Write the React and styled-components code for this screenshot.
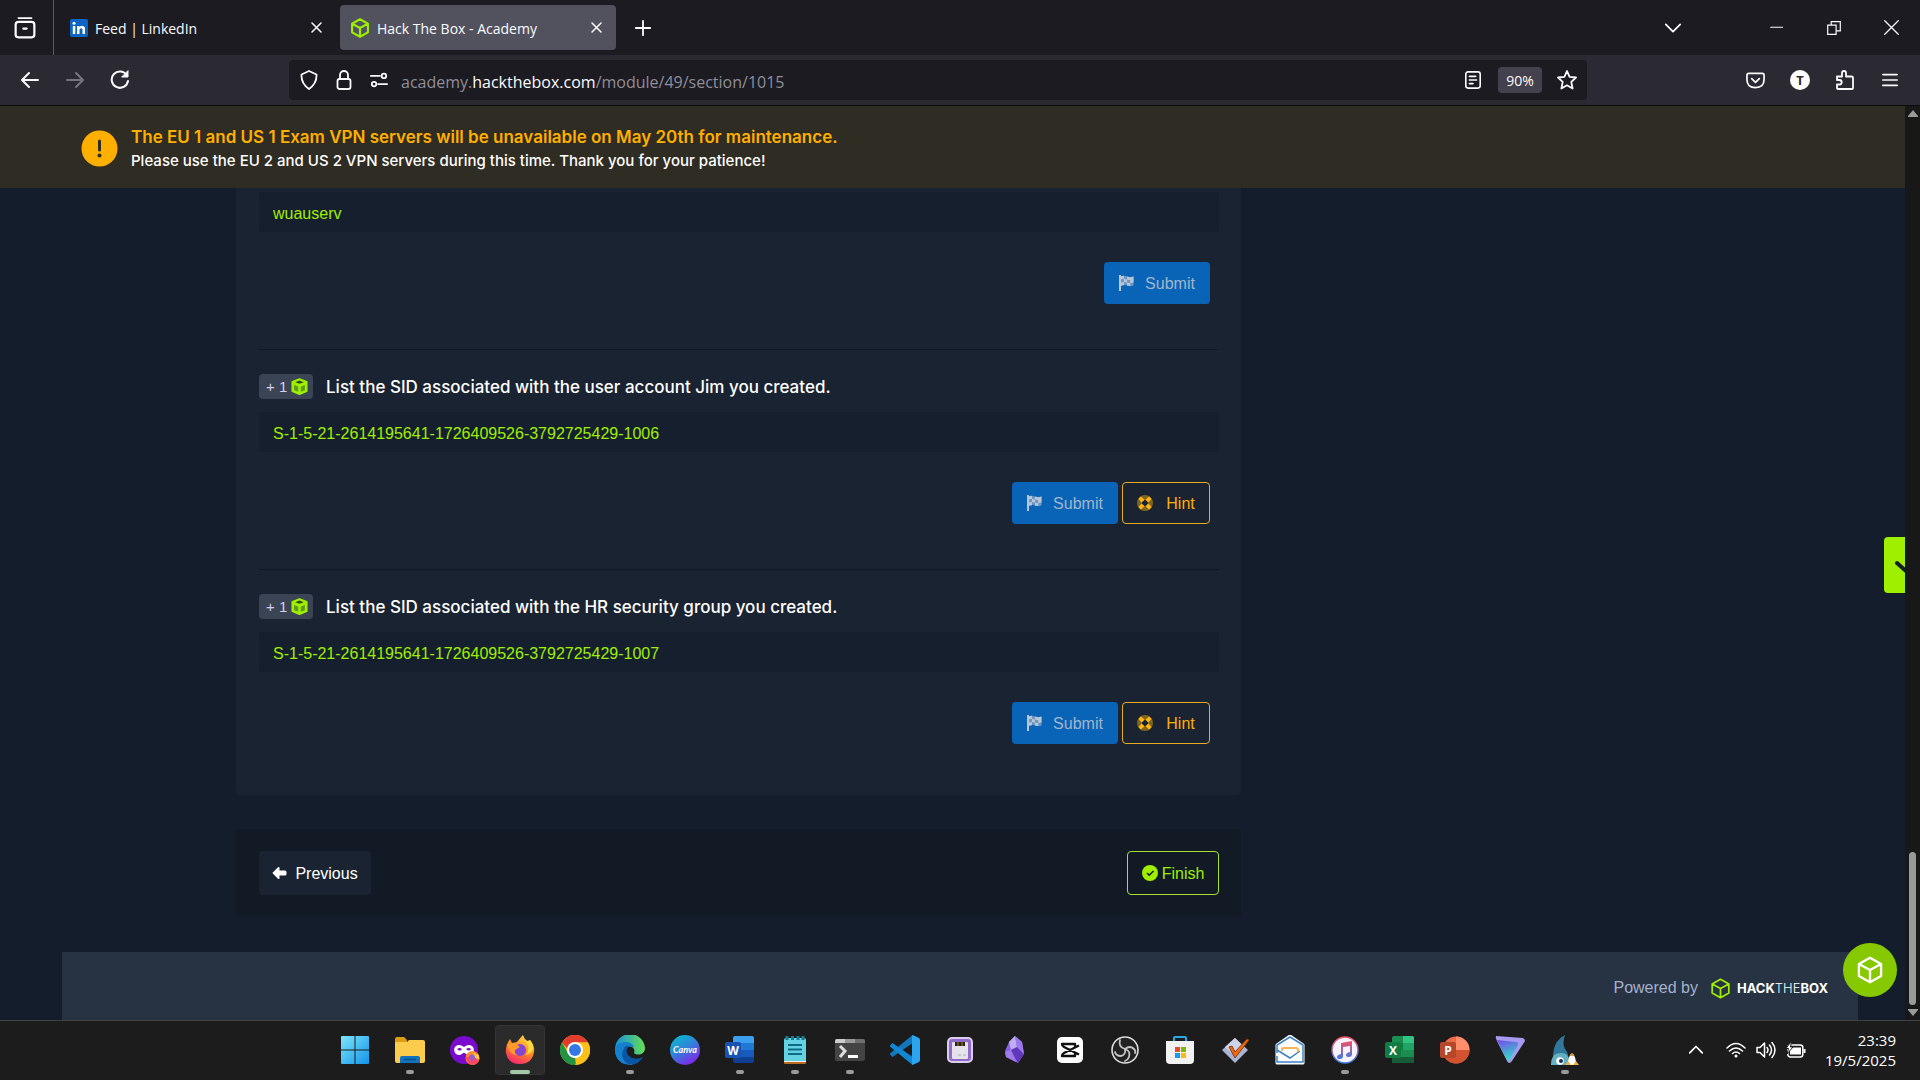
import React from 'react';
import styled, { createGlobalStyle, css } from 'styled-components';

const GlobalStyle = createGlobalStyle`
  * { box-sizing: border-box; }
  body { margin: 0; background: #141d2b; }
  button, input { font: inherit; color: inherit; }
  svg { display: block; flex: none; }
`;

const uiFont = `'Open Sans', 'Noto Sans', sans-serif`;
const pageFont = `'Liberation Sans', Arial, sans-serif`;

const Screen = styled.div`
  display: flex;
  flex-direction: column;
  height: 100vh;
  min-height: 960px;
  overflow: hidden;
`;

/* ---------- browser chrome ---------- */

const TabBar = styled.header`
  display: flex;
  align-items: center;
  height: 55px;
  background: #1c1b22;
  color: #fbfbfe;
  font: 14px ${uiFont};
`;

const IconButton = styled.button`
  display: flex;
  align-items: center;
  justify-content: center;
  flex: none;
  width: ${p => p.$w || 32}px;
  height: 32px;
  padding: 0;
  border: 0;
  background: none;
  color: ${p => p.$color || '#fbfbfe'};
`;

const RecentBox = styled.div`
  display: flex;
  align-items: center;
  justify-content: center;
  width: 54px;
  height: 55px;
  padding-right: 3px;
  border-right: 1px solid #5b5b66;
`;

const Tab = styled.div`
  display: flex;
  align-items: center;
  gap: 7px;
  width: 276px;
  height: 45px;
  margin-left: ${p => (p.$active ? 4 : 6)}px;
  padding: 0 4px 0 10px;
  border-radius: 4px;
  background: ${p => (p.$active ? '#52525e' : 'transparent')};
  span { flex: 1; padding-top: 2px; white-space: nowrap; }
`;

const WindowControls = styled.div`
  display: flex;
  align-items: center;
  gap: 25px;
  margin-left: auto;
  padding-right: 13px;
`;

const NavBar = styled.nav`
  display: flex;
  align-items: center;
  height: 51px;
  padding: 0 14px;
  background: #2b2a33;
  border-bottom: 1px solid #0c0c0d;
`;

const NavButtons = styled.div`
  display: flex;
  gap: 13px;
  width: 275px;
`;

const UrlBar = styled.div`
  display: flex;
  align-items: center;
  flex: 1;
  height: 40px;
  margin-right: 152px;
  padding: 0 4px;
  border-radius: 4px;
  background: #1c1b22;
  color: #fbfbfe;
`;

const UrlText = styled.div`
  flex: 1;
  margin-left: 6px;
  padding-top: 3px;
  font: 16px ${uiFont};
  color: #8f8e98;
  white-space: nowrap;
  b { font-weight: 400; color: #fbfbfe; }
`;

const Zoom = styled.button`
  width: 44px;
  height: 26px;
  margin: 0 9px;
  padding: 0;
  border: 0;
  border-radius: 4px;
  background: #42414d;
  font: 14px ${uiFont};
`;

const Toolbar = styled.div`
  display: flex;
  gap: 13px;
`;

/* ---------- web page ---------- */

const Viewport = styled.div`
  display: flex;
  flex: 1;
  min-height: 0;
`;

const Page = styled.div`
  position: relative;
  display: flex;
  flex-direction: column;
  flex: 1;
  min-width: 0;
  background: #141d2b;
  color: #fff;
  font-family: ${pageFont};
`;

const Banner = styled.div`
  display: flex;
  align-items: center;
  gap: 13px;
  height: 82px;
  padding: 3px 0 0 81px;
  background: #2f2c23;
  h1 { margin: 0; font: 600 17px/24px Inter, sans-serif; color: #ffaf00; }
  p { margin: 0; font: 500 15px/24px Inter, sans-serif; }
`;

const Columns = styled.main`
  display: grid;
  grid-template-columns: minmax(0, 1005fr) minmax(0, 664fr);
  padding-left: 236px;
`;

const QuestionCard = styled.section`
  padding: 4px 22px 51px 23px;
  border-radius: 0 0 4px 4px;
  background: #1a2332;
`;

const Question = styled.form`
  display: flex;
  flex-direction: column;
  & + & {
    margin-top: 45px;
    padding-top: 24px;
    border-top: 1px solid #111925;
  }
`;

const QuestionHead = styled.div`
  display: flex;
  align-items: center;
  gap: 13px;
  height: 25px;
  margin-bottom: 13px;
  label { font: 500 17px Inter, sans-serif; }
`;

const Points = styled.span`
  display: flex;
  align-items: center;
  justify-content: space-between;
  width: 54px;
  height: 25px;
  padding: 0 5px 0 7px;
  border-radius: 4px;
  background: #3b4454;
  color: #d3d0ee;
  font-size: 15px;
`;

const Answer = styled.input`
  width: 100%;
  height: 40px;
  padding: 3px 14px 0;
  border: 0;
  border-radius: 4px;
  background: #161f2d;
  color: #9fef00;
  font: 16px ${pageFont};
  outline: none;
`;

const Actions = styled.div`
  display: flex;
  justify-content: flex-end;
  gap: 4px;
  margin: 30px 9px 0 0;
`;

const variants = {
  submit: css`
    width: 106px;
    background: #0964b8;
    color: #a1b5cb;
  `,
  hint: css`
    width: 88px;
    border-color: #e8ab22;
    color: #ffaf00;
  `,
  previous: css`
    width: 112px;
    height: 44px;
    background: #1a2332;
    color: #fff;
  `,
  finish: css`
    width: 92px;
    height: 44px;
    border-color: #a9e036;
    color: #9fef00;
  `,
};

const Button = styled.button`
  display: flex;
  align-items: center;
  justify-content: center;
  gap: ${p => p.$gap}px;
  height: 42px;
  padding: 0;
  border: 1px solid transparent;
  border-radius: 4px;
  background: transparent;
  font: 16px ${pageFont};
  span { padding-top: 2px; }
  ${p => variants[p.$kind]}
`;

const Pager = styled.div`
  display: flex;
  justify-content: space-between;
  align-items: center;
  height: 87px;
  margin-top: 34px;
  padding: 0 22px 0 23px;
  border-radius: 4px;
  background: #111a25;
`;

const Footer = styled.footer`
  display: flex;
  align-items: center;
  justify-content: flex-end;
  height: 68px;
  margin: auto 47px 0 62px;
  padding: 4px 30px 0 0;
  background: #273342;
  color: #a4b1cd;
  font-size: 16px;
`;

const Brand = styled.a`
  display: flex;
  align-items: center;
  gap: 6px;
  margin-left: 12px;
  color: #fff;
  text-decoration: none;
  font: 300 13px Inter, sans-serif;
  b { font-weight: 700; }
`;

const SideTab = styled.button`
  position: absolute;
  right: 0;
  top: 431px;
  width: 21px;
  height: 56px;
  padding: 0;
  border: 0;
  border-radius: 4px 0 0 4px;
  background: #9fef00;
`;

const ChatButton = styled.button`
  position: absolute;
  right: 8px;
  bottom: 23px;
  display: flex;
  align-items: center;
  justify-content: center;
  width: 54px;
  height: 54px;
  padding: 0;
  border: 0;
  border-radius: 50%;
  background: #86c900;
  color: #fff;
`;

const ScrollBar = styled.div`
  display: flex;
  flex-direction: column;
  align-items: center;
  width: 15px;
  padding: 4px 0;
  background: #181818;
`;

const Thumb = styled.div`
  width: 7px;
  height: 153px;
  margin: auto 0 4px;
  border-radius: 4px;
  background: #9a9a9a;
`;

/* ---------- taskbar ---------- */

const TaskBar = styled.footer`
  display: grid;
  grid-template-columns: 1fr auto 1fr;
  align-items: center;
  height: 60px;
  padding-bottom: 2px;
  border-top: 1px solid #444;
  background: #1c1c1c;
  color: #fff;
  font: 15px/20px ${uiFont};
`;

const Apps = styled.div`
  display: flex;
  grid-column: 2;
  gap: 5px;
`;

const AppButton = styled.button`
  position: relative;
  display: flex;
  align-items: center;
  justify-content: center;
  width: 50px;
  height: 50px;
  padding: 0;
  border: 1px solid ${p => (p.$state === 'active' ? '#333' : 'transparent')};
  border-radius: 4px;
  background: ${p => (p.$state === 'active' ? '#2b2b2b' : 'transparent')};
  &::after {
    content: '';
    position: absolute;
    bottom: 0;
    width: ${p => (p.$state === 'active' ? 20 : 8)}px;
    height: 4px;
    border-radius: 2px;
    background: ${p => (p.$state === 'active' ? '#a5c8a8' : '#9a9a9a')};
    display: ${p => (p.$state ? 'block' : 'none')};
  }
`;

const Tray = styled.div`
  display: flex;
  align-items: center;
  justify-content: flex-end;
  gap: 10px;
  padding-right: 24px;
`;

const TrayToggle = styled.button`
  margin-right: 13px;
  padding: 0;
  border: 0;
  background: none;
`;

const Clock = styled.time`
  margin-left: 9px;
  text-align: right;
`;

/* ---------- icons ---------- */

const Line = ({ s = 20, w = 2, children, ...rest }) => (
  <svg width={s} height={s} viewBox="0 0 20 20" fill="none" stroke="currentColor" strokeWidth={w} strokeLinecap="round" strokeLinejoin="round" {...rest}>{children}</svg>
);

const Cube = ({ s, w = 2, color = 'currentColor' }) => (
  <svg width={s} height={s} viewBox="0 0 24 24" fill="none" stroke={color} strokeWidth={w} strokeLinejoin="round">
    <path d="M12 1.5 21.5 6.8V17.2L12 22.5 2.5 17.2V6.8ZM2.5 6.8 12 12l9.5-5.2M12 12v10.5" />
  </svg>
);

const PointsCube = () => (
  <svg width="17" height="17" viewBox="0 0 18 18">
    <path d="M9 1.200 16.500 4v10L9 17 1.500 14V4Z" fill="#9fef00" stroke="#9fef00" strokeWidth="2" strokeLinejoin="round" />
    <path d="m4.500 4.400 4.500-1.800 4.500 1.800L9 6.200Z" fill="#2c4a25" />
    <path d="m3.300 7.300 4.300 1.700v5.600l-4.300-1.700ZM14.700 7.300 10.400 9v5.600l4.300-1.700Z" fill="#5f9a20" />
  </svg>
);

const Flag = () => (
  <svg width="15" height="16" viewBox="0 0 15 16">
    <path d="M0 0h2v16H0Z" fill="#b9c6d4" />
    <path d="M2 1.500q3-1.500 6 0t6.500 0v9q-3.500 1.500-6.500 0t-6 0Z" fill="#6c97c4" />
    <path d="M2 1.200 5 .8v3l3 .8v3L5 7v3.300l-3 .5V7.500l3-.5V3.800l-3 .5ZM8 1.500l3.200.8v3l3.300-.8v3l-3.300.8V11L8 10.400v-3l3.200.9v-3L8 4.600ZM11.200 2.200l3.300-.7v3l-3.300.8Z" fill="#b9c6d4" />
  </svg>
);

const LifeRing = () => (
  <svg width="16" height="16" viewBox="0 0 16 16">
    <circle cx="8" cy="8" r="5.500" fill="none" stroke="#80651f" strokeWidth="5" />
    <path d="m1.500 3.900 2.400-2.400 3.600 3.200-2.800 2.800ZM14.500 3.900l-2.400-2.400-3.600 3.200 2.800 2.800ZM1.500 12.100l2.400 2.400 3.600-3.200-2.800-2.800ZM14.500 12.100l-2.400 2.400-3.600-3.200 2.800-2.800Z" fill="#ffb617" />
  </svg>
);

const icons = {
  windows: <><defs><linearGradient id="win" x2="1" y2="1"><stop stopColor="#7de5fd" /><stop offset="1" stopColor="#1294e8" /></linearGradient></defs><path d="M1 2q0-1 1-1h12.5v13.5H1ZM15.5 1H28q1 0 1 1v12.5H15.500ZM1 15.500h13.500V29H2q-1 0-1-1ZM15.500 15.500H29V28q0 1-1 1H15.500Z" fill="url(#win)" /></>,
  explorer: <><path d="M0 4q0-2 2-2h7l3 3v6H0Z" fill="#dd9c13" /><path d="M0 7h12l2-2h14q2 0 2 2v19q0 2-2 2H2q-2 0-2-2Z" fill="#fccc4c" /><path d="M5 28v-5q0-2 2-2h16q2 0 2 2v5Z" fill="#1272bd" /><path d="M9 24.500h12" stroke="#075088" strokeWidth="1.500" /></>,
  private: <><circle cx="14" cy="15" r="14" fill="#7a0bcd" /><path d="M5 12c3-3 6-2 9 0 3-2 6-3 9 0 2 3 0 8-4 8-3 0-3-2-5-2s-2 2-5 2c-4 0-6-5-4-8Z" fill="#fff" /><path d="M7 14q3-2 5 0-2 3-5 0ZM16 14q3-2 5 0-2 3-5 0Z" fill="#7a0bcd" /><circle cx="22.500" cy="23" r="7" fill="#ff8a2d" /><path d="M15.500 22q2 8 8 8 6-2 6-8Z" fill="#ff4767" /><path d="m23 15 2 4 4 1 0 5-5-3Z" fill="#ffc93d" /><circle cx="22" cy="22.500" r="3" fill="#9a5ccf" /></>,
  firefox: <><defs><linearGradient id="ff" x1=".8" x2=".3" y2="1"><stop stopColor="#ffe04a" /><stop offset=".5" stopColor="#ff8a24" /><stop offset="1" stopColor="#f8256e" /></linearGradient></defs><path d="M18 0q1 4 4 6 2 0 3-1 5 6 4 12-2 12-14 12Q3 29 1 18 0 11 5 4l2 4 5-1q3-4 6-7Z" fill="url(#ff)" /><circle cx="15" cy="15" r="6" fill="#8346d2" /><path d="M2 9q2 1 4-1l5 1 4 3-5 3q-1 4 3 5-7 0-9-5Z" fill="#ff9a2b" /><path d="M18 0q2 6 4 9 3 5-1 11 8-2 7-10l-3-5q-1 1-3 1-3-2-4-6Z" fill="#ffd83d" /></>,
  chrome: <><circle cx="15" cy="15" r="15" fill="#fbc116" /><path d="M2 7.500A15 15 0 0 1 28 7.500H15v15Z" fill="#e33b2e" /><path d="M2 7.500 8.500 19 15 22.500 16 30A15 15 0 0 1 2 7.500Z" fill="#229342" /><path d="m21.500 19-6.500 11a15 15 0 0 0 13-22.500H15Z" fill="#fbc116" /><circle cx="15" cy="15" r="8" fill="#fff" /><circle cx="15" cy="15" r="6" fill="#3478e5" /></>,
  edge: <><defs><linearGradient id="edge" x2="1"><stop stopColor="#168fdc" /><stop offset="1" stopColor="#67df55" /></linearGradient></defs><path d="M0 15A15 15 0 0 1 30 13c0 7-8 8-11 5 2-6-5-9-11-5-3 2-3 10 1 16Q0 24 0 15Z" fill="url(#edge)" /><path d="M0 15q2-8 10-8 7 0 9 5-8-2-8 5 1 8 9 10l-3 3Q1 30 0 15Z" fill="#1580ce" /><path d="M9 13q2-3 5-2-5 5 0 10 6 5 14 1-5 9-15 7Q4 23 9 13Z" fill="#0b55a5" /></>,
  canva: <><defs><linearGradient id="canva" x2=".6" y2="1"><stop stopColor="#00c4cc" /><stop offset=".5" stopColor="#2c88d9" /><stop offset="1" stopColor="#7c2ae8" /></linearGradient></defs><circle cx="15" cy="15" r="15" fill="url(#canva)" /><text x="15" y="18" textAnchor="middle" fontSize="9" fontStyle="italic" fontWeight="700" fontFamily="Lato" fill="#fff">Canva</text></>,
  word: <><path d="M8 3q0-2 2-2h17q2 0 2 2v6H8Z" fill="#3d9ff0" /><path d="M8 8h21v7H8Z" fill="#2079d3" /><path d="M8 15h21v7H8Z" fill="#185abd" /><path d="M8 22h21v4q0 2-2 2H10q-2 0-2-2Z" fill="#103f91" /><rect y="7" width="16" height="16" rx="2" fill="#1853b2" /><text x="8" y="19.500" textAnchor="middle" fontSize="12" fontWeight="700" fontFamily="Open Sans" fill="#fff">W</text></>,
  notepad: <><rect x="4" y="24" width="22" height="5" rx="1" fill="#b96c1d" /><rect x="4" y="3" width="22" height="24" rx="2" fill="#63d2e3" /><path d="M4 26h22v1H4Z" fill="#eee" /><path d="M8 10h14M8 14.500h14M8 19h14" stroke="#106b82" strokeWidth="2" /><path d="M7 1v4M12.500 1v4M18 1v4M23 1v4" stroke="#147e90" strokeWidth="3" /></>,
  terminal: <><rect y="4" width="30" height="22" rx="2" fill="#444" /><path d="M0 8V6q0-2 2-2h8v4Z" fill="#ccc" /><path d="M10 4h10v4H10Z" fill="#999" /><path d="M20 4h8q2 0 2 2v2H20Z" fill="#707070" /><path d="m5 11 5 5-5 6" fill="none" stroke="#ddd" strokeWidth="3" /><path d="M13 21.500h10" stroke="#fff" strokeWidth="3" /></>,
  code: <><path d="m2.500 22-2-2q-1-1 0-2L22 .500v8Z" fill="#1177bd" /><path d="m2.500 8-2 2q-1 1 0 2L22 29.500v-8Z" fill="#1287d4" /><path d="M22 0q1 0 7 3 1 1 1 2v20q0 1-1 2-6 3-7 3Z" fill="#2ba5ef" /></>,
  disk: <><rect x="3" y="3" width="24" height="24" rx="4" fill="#8f6cc8" stroke="#dccdee" strokeWidth="2" /><rect x="7" y="7" width="16" height="17" rx="1" fill="#e6e2ec" /><path d="M10 7h10v4H10Z" fill="#2a2418" /><path d="M13 7v4M17 7v4" stroke="#b08a28" /><path d="M13 20h3m2 0h3" stroke="#aaa" /></>,
  obsidian: <><path d="m15 1 7 6 2 12-6 9-12-6-1-6 4-9Z" fill="#8b60e6" /><path d="m15 1 2 11-6 3-2-8Z" fill="#c2adf5" /><path d="m11 15-6 2 1 5 10 5Z" fill="#a17be9" /><path d="m17 12 7 7-6 9-7-13Z" fill="#6038b9" /><path d="m15 1 7 6 2 12-7-7Z" fill="#9a78e9" /></>,
  capcut: <><rect x="2" y="2" width="26" height="26" rx="5" fill="#fff" /><path d="M24 10.500 9 18q-2 1-2 3h13v-2.500M24 19.500 9 12q-2-1-2-3h13v2.500" fill="none" stroke="#111" strokeWidth="2.400" strokeLinejoin="round" /></>,
  obs: <><circle cx="15" cy="15" r="13" fill="#222" stroke="#ddd" strokeWidth="1.600" /><path d="M10 5q-2 7 5 9 5-4 9 0 2 2 1 4M15 14q1 6-4 7-5 0-6-4M15 14q6 2 4 8-1 3-4 4" fill="none" stroke="#c4c4c4" strokeWidth="1.800" strokeLinecap="round" /></>,
  store: <><path d="M9 7V3q0-1 1-1h10q1 0 1 1v4" fill="none" stroke="#2ca9e5" strokeWidth="2" /><path d="M1 6h28v19q0 4-4 4H5q-4 0-4-4Z" fill="#f2f2f2" /><path d="M10 12h5v5h-5Z" fill="#e84e25" /><path d="M16 12h5v5h-5Z" fill="#7eb900" /><path d="M10 18h5v5h-5Z" fill="#149fea" /><path d="M16 18h5v5h-5Z" fill="#fdb813" /></>,
  todo: <><path d="m15 3 13 12-13 13L2 15Z" fill="#aab5d5" /><path d="m15 3 9 9-9 9L5 12Z" fill="#ccd4e9" /><path d="m9 12 3-1 3 6L27 4l2 1-14 18Z" fill="#ed6b12" stroke="#8f3708" /></>,
  mail: <><path d="M2 10 15 1l13 9v18H2Z" fill="#fff" stroke="#fff" strokeWidth="3" strokeLinejoin="round" /><path d="M2 18v-8l13-8 13 8v17H2v-6" fill="none" stroke="#3b83c7" strokeWidth="1.500" /><path d="m2 15 13 8 10-7" fill="none" stroke="#3b83c7" strokeWidth="1.500" /><path d="M7 16v-2q0-1 2-1h12q2 0 2 2v2" fill="none" stroke="#f2b656" strokeWidth="2" /></>,
  itunes: <><defs><linearGradient id="music" x2="0" y2="1"><stop stopColor="#f84f67" /><stop offset="1" stopColor="#397de8" /></linearGradient></defs><circle cx="15" cy="15" r="13" fill="#f6f4fa" stroke="url(#music)" strokeWidth="1.500" /><path d="M11 8 22 6v13q0 3-3 3t-3-2 4-3v-6l-7 1v9q0 3-3 3t-3-2 4-3Z" fill="url(#music)" /></>,
  excel: <><path d="M7 3q0-2 2-2h18q2 0 2 2v24q0 1-2 1H9q-2 0-2-1Z" fill="#1c8d50" /><path d="M18 1h9q2 0 2 2v5H18Z" fill="#31c481" /><path d="M7 8h11v7H7Z" fill="#107c41" /><path d="M18 8h11v7H18Z" fill="#20a466" /><path d="M7 22h22v5q0 1-2 1H9q-2 0-2-1Z" fill="#185c37" /><rect y="7" width="16" height="16" rx="2" fill="#107c41" /><text x="8" y="19.500" textAnchor="middle" fontSize="12" fontWeight="700" fontFamily="Open Sans" fill="#fff">X</text></>,
  powerpoint: <><circle cx="16" cy="15" r="13.500" fill="#ed6c47" /><path d="M16 1.500A13.500 13.500 0 0 1 29.500 15H16Z" fill="#ff8f6b" /><path d="M2.500 15h27a13.500 13.500 0 0 1-27 0Z" fill="#d35230" /><rect y="7" width="16" height="16" rx="2" fill="#b7472a" /><text x="8" y="19.500" textAnchor="middle" fontSize="12" fontWeight="700" fontFamily="Open Sans" fill="#fff">P</text></>,
  vpn: <><defs><linearGradient id="vpn" x2=".3" y2="1"><stop stopColor="#7548ed" /><stop offset="1" stopColor="#35dbc7" /></linearGradient></defs><path d="M1 1q-1 2 1 5l10 20q2 4 5 0L30 6q0-2-2-3Z" fill="#a59aee" /><path d="m2 5 19 2q3 0 2 3l-9 16-3-3Z" fill="url(#vpn)" /></>,
  shark: <><path d="M3 20Q4 5 15 0q-3 9 0 14 4 5 3 10H3Z" fill="#2f789b" /><path d="M1 30q0-12 10-12 9 0 9 12Z" fill="#65afc3" /><circle cx="10" cy="26" r="3.800" fill="#fff" /><circle cx="11" cy="26" r="2" fill="#15334a" /><path d="M18 30q0-10 4-11 4 1 4 11Z" fill="#fff" /><path d="M20.500 21q1.500-4 3 0" stroke="#c79743" fill="none" strokeWidth="2" /><path d="m15 30 3-4 3 4ZM23 30l3-4 3 4Z" fill="#f2b23c" /></>,
};

const apps = [
  ['windows', 'Start'], ['explorer', 'File Explorer', 'open'], ['private', 'Firefox Private Browsing'],
  ['firefox', 'Firefox', 'active'], ['chrome', 'Chrome'], ['edge', 'Edge', 'open'], ['canva', 'Canva'],
  ['word', 'Word', 'open'], ['notepad', 'Notepad', 'open'], ['terminal', 'Terminal', 'open'],
  ['code', 'Visual Studio Code'], ['disk', 'Save Manager'], ['obsidian', 'Obsidian'], ['capcut', 'CapCut'],
  ['obs', 'OBS Studio'], ['store', 'Microsoft Store'], ['todo', 'Tasks'], ['mail', 'Mail'],
  ['itunes', 'iTunes', 'open'], ['excel', 'Excel'], ['powerpoint', 'PowerPoint'], ['vpn', 'Proton VPN'],
  ['shark', 'Wireshark', 'open'],
];

const questions = [
  { id: 'q1', answer: 'wuauserv' },
  { id: 'q2', text: 'List the SID associated with the user account Jim you created.', answer: 'S-1-5-21-2614195641-1726409526-3792725429-1006', hint: true },
  { id: 'q3', text: 'List the SID associated with the HR security group you created.', answer: 'S-1-5-21-2614195641-1726409526-3792725429-1007', hint: true },
];

const CloseIcon = () => <Line s={15} w={2}><path d="m4 4 12 12M16 4 4 16" /></Line>;

function BrowserChrome() {
  return (
    <>
      <TabBar>
        <RecentBox>
          <IconButton aria-label="Recent browsing">
            <Line s={22} w={2}><path d="M4 1h12" strokeWidth="1.500" /><rect x="1.500" y="4.500" width="17" height="14" rx="2.500" /><path d="M8.500 10.500h3" /></Line>
          </IconButton>
        </RecentBox>
        <Tab>
          <svg width="18" height="18" viewBox="0 0 18 18"><rect width="18" height="18" rx="2" fill="#0a66c2" /><circle cx="4" cy="4.200" r="1.500" fill="#fff" /><path d="M2.800 7h2.500v8H2.800ZM7 7h2.400v1q3-2.500 5.600.500V15h-2.500v-4.500q-1-2.300-3 0V15H7Z" fill="#fff" /></svg>
          <span>Feed | LinkedIn</span>
          <IconButton aria-label="Close Feed | LinkedIn"><CloseIcon /></IconButton>
        </Tab>
        <Tab $active>
          <Cube s={20} w={2.500} color="#9fef00" />
          <span>Hack The Box - Academy</span>
          <IconButton aria-label="Close Hack The Box - Academy"><CloseIcon /></IconButton>
        </Tab>
        <IconButton $w={54} aria-label="New tab"><Line s={18}><path d="M10 2v16M2 10h16" /></Line></IconButton>
        <WindowControls>
          <IconButton $w={126} aria-label="List all tabs"><Line s={18}><path d="m2 6 8 8 8-8" /></Line></IconButton>
          <IconButton aria-label="Minimize"><Line s={14} w={1.500}><path d="M1 9h17" /></Line></IconButton>
          <IconButton aria-label="Restore"><Line s={14} w={1.700} strokeLinejoin="miter"><path d="M1 6h12v13H1ZM6 6V1h13v13h-6" /></Line></IconButton>
          <IconButton aria-label="Close"><Line s={15} w={1.700}><path d="m1 1 18 18M19 1 1 19" /></Line></IconButton>
        </WindowControls>
      </TabBar>
      <NavBar>
        <NavButtons>
          <IconButton aria-label="Back"><Line s={20}><path d="M18 10H2m7-7-7 7 7 7" /></Line></IconButton>
          <IconButton aria-label="Forward" $color="#77767f"><Line s={20}><path d="M2 10h16m-7-7 7 7-7 7" /></Line></IconButton>
          <IconButton aria-label="Reload"><Line s={20}><path d="M17 5.500A8.200 8.200 0 1 0 18 11" /><path d="M18 1v6h-6Z" fill="currentColor" strokeWidth="1" /></Line></IconButton>
        </NavButtons>
        <UrlBar>
          <IconButton aria-label="Tracking protection"><Line s={20} w={1.800}><path d="m10 1 7.500 3.500q.5 9-7.500 14.500Q2 13.500 2.500 4.500Z" /></Line></IconButton>
          <IconButton $w={38} aria-label="Connection secure"><Line s={20} w={1.800}><path d="M6 9V5a4 4 0 0 1 8 0v4" /><rect x="3.500" y="9" width="13" height="10" rx="2" /></Line></IconButton>
          <IconButton aria-label="Permissions"><Line s={18} w={2}><path d="M1 5.500h10M9 14.500h10" /><circle cx="15.500" cy="5.500" r="2.500" /><circle cx="4.500" cy="14.500" r="2.500" /></Line></IconButton>
          <UrlText>academy.<b>hackthebox.com</b>/module/49/section/1015</UrlText>
          <IconButton aria-label="Reader view"><Line s={18} w={1.800}><rect x="2" y="1" width="16" height="18" rx="2.500" /><path d="M6 6h7M6 10h8M6 14h4" /></Line></IconButton>
          <Zoom aria-label="Reset zoom level">90%</Zoom>
          <IconButton aria-label="Bookmark"><Line s={20} w={1.800}><path d="m10 1 2.600 5.800 6.400.7-4.700 4.300 1.300 6.700L10 15.300l-5.600 3.200 1.300-6.700L1 7.500l6.400-.7Z" /></Line></IconButton>
        </UrlBar>
        <Toolbar>
          <IconButton aria-label="Pocket"><Line s={19} w={1.800}><path d="M3 2.500h14q2 0 2 2V9q0 8.500-9 8.500T1 9V4.500q0-2 2-2Z" /><path d="m6 8 4 4 4-4" /></Line></IconButton>
          <IconButton aria-label="Account"><svg width="20" height="20" viewBox="0 0 20 20"><circle cx="10" cy="10" r="10" fill="#fff" /><text x="10" y="14.500" textAnchor="middle" fontFamily="Open Sans" fontWeight="700" fontSize="13" fill="#2b2a33">T</text></svg></IconButton>
          <IconButton aria-label="Extensions"><Line s={20} w={1.800}><path d="M2 6.500h5V3q0-2 2-2t2 2v3.500h5.500q1.500 0 1.500 1.500v10q0 1-1 1H3q-1 0-1-1v-3.500h2.500q2.200 0 2.200-2.200T4.500 10H2Z" /></Line></IconButton>
          <IconButton aria-label="Menu"><Line s={18} w={1.800}><path d="M2 4h16M2 10h16M2 16h16" /></Line></IconButton>
        </Toolbar>
      </NavBar>
    </>
  );
}

function QuestionBlock({ id, text, answer, hint }) {
  return (
    <Question onSubmit={e => e.preventDefault()}>
      {text && (
        <QuestionHead>
          <Points>+ 1 <PointsCube /></Points>
          <label htmlFor={id}>{text}</label>
        </QuestionHead>
      )}
      <Answer id={id} defaultValue={answer} readOnly aria-label={text ? undefined : 'Answer'} />
      <Actions>
        <Button $kind="submit" $gap={11} type="submit"><Flag /><span>Submit</span></Button>
        {hint && <Button $kind="hint" $gap={13} type="button"><LifeRing /><span>Hint</span></Button>}
      </Actions>
    </Question>
  );
}

export default function App() {
  return (
    <Screen>
      <GlobalStyle />
      <BrowserChrome />
      <Viewport>
        <Page>
          <Banner role="alert">
            <svg width="37" height="37" viewBox="0 0 37 37"><circle cx="18.500" cy="18.500" r="18" fill="#ffaf00" /><path d="M18.500 11v9" stroke="#2f2c23" strokeWidth="3" strokeLinecap="round" /><circle cx="18.500" cy="25.500" r="2" fill="#2f2c23" /></svg>
            <div>
              <h1>The EU 1 and US 1 Exam VPN servers will be unavailable on May 20th for maintenance.</h1>
              <p>Please use the EU 2 and US 2 VPN servers during this time. Thank you for your patience!</p>
            </div>
          </Banner>
          <Columns>
            <div>
              <QuestionCard>
                {questions.map(q => <QuestionBlock key={q.id} {...q} />)}
              </QuestionCard>
              <Pager>
                <Button $kind="previous" $gap={8}>
                  <svg width="15" height="14" viewBox="0 0 15 14"><path d="M7.500 1.500v3H13q1.500 0 1.500 1.500v2q0 1.500-1.500 1.500H7.500v3q-.5 1-1.500.3L.8 7.600q-.6-.6 0-1.200L6 1.200q1-.7 1.500.3Z" fill="#fff" /></svg>
                  <span>Previous</span>
                </Button>
                <Button $kind="finish" $gap={4}>
                  <svg width="16" height="16" viewBox="0 0 16 16"><circle cx="8" cy="8" r="8" fill="#9fef00" /><path d="m5 8 2.200 2.200L11.500 6" fill="none" stroke="#111a25" strokeWidth="1.500" /></svg>
                  <span>Finish</span>
                </Button>
              </Pager>
            </div>
          </Columns>
          <Footer>
            Powered by
            <Brand href="#"><Cube s={21} w={2} color="#9fef00" /><span><b>HACK</b>THE<b>BOX</b></span></Brand>
          </Footer>
          <SideTab aria-label="Open panel">
            <svg width="21" height="56" viewBox="0 0 21 56"><path d="m13 26 9 8" stroke="#141d2b" strokeWidth="4" strokeLinecap="round" /></svg>
          </SideTab>
          <ChatButton aria-label="Open help"><Cube s={28} w={2} /></ChatButton>
        </Page>
        <ScrollBar aria-hidden="true">
          <svg width="10" height="7" viewBox="0 0 10 7"><path d="M5 0 10 6v1H0V6Z" fill="#9a9a9a" /></svg>
          <Thumb />
          <svg width="10" height="7" viewBox="0 0 10 7"><path d="M5 7 10 1V0H0v1Z" fill="#9a9a9a" /></svg>
        </ScrollBar>
      </Viewport>
      <TaskBar>
        <Apps>
          {apps.map(([key, name, state]) => (
            <AppButton key={key} $state={state} aria-label={name}>
              <svg width="30" height="30" viewBox="0 0 30 30">{icons[key]}</svg>
            </AppButton>
          ))}
        </Apps>
        <Tray>
          <TrayToggle aria-label="Show hidden icons"><Line s={14} w={2.500}><path d="m1 14 9-9 9 9" /></Line></TrayToggle>
          <svg width="20" height="16" viewBox="0 0 20 16" fill="none" stroke="#fff" strokeWidth="1.500" strokeLinecap="round"><path d="M1 6q9-9 18 0M3.500 9q6.500-6 13 0M6.500 11.500q3.500-3 7 0" /><circle cx="10" cy="14" r="1.500" fill="#fff" stroke="none" /></svg>
          <svg width="20" height="18" viewBox="0 0 20 18" fill="none" stroke="#fff" strokeWidth="1.500" strokeLinecap="round" strokeLinejoin="round"><path d="M1 6.500h3L8.500 2v14L4 11.500H1ZM11 6.500q2 2.500 0 5M13.500 4q4 5 0 10M16 1.500q6 7.500 0 15" /></svg>
          <svg width="20" height="18" viewBox="0 0 20 18"><rect x="1.800" y="4" width="15" height="12" rx="2.500" fill="none" stroke="#fff" strokeWidth="1.500" /><path d="M4 6.500h11v7H4Z" fill="#fff" /><path d="M17.500 8h2v4h-2Z" fill="#fff" /><path d="M5.500 0 0 7.500h2.500L1 13l6-7H4.500Z" fill="#fff" stroke="#1c1c1c" /></svg>
          <Clock>23:39<br />19/5/2025</Clock>
        </Tray>
      </TaskBar>
    </Screen>
  );
}
